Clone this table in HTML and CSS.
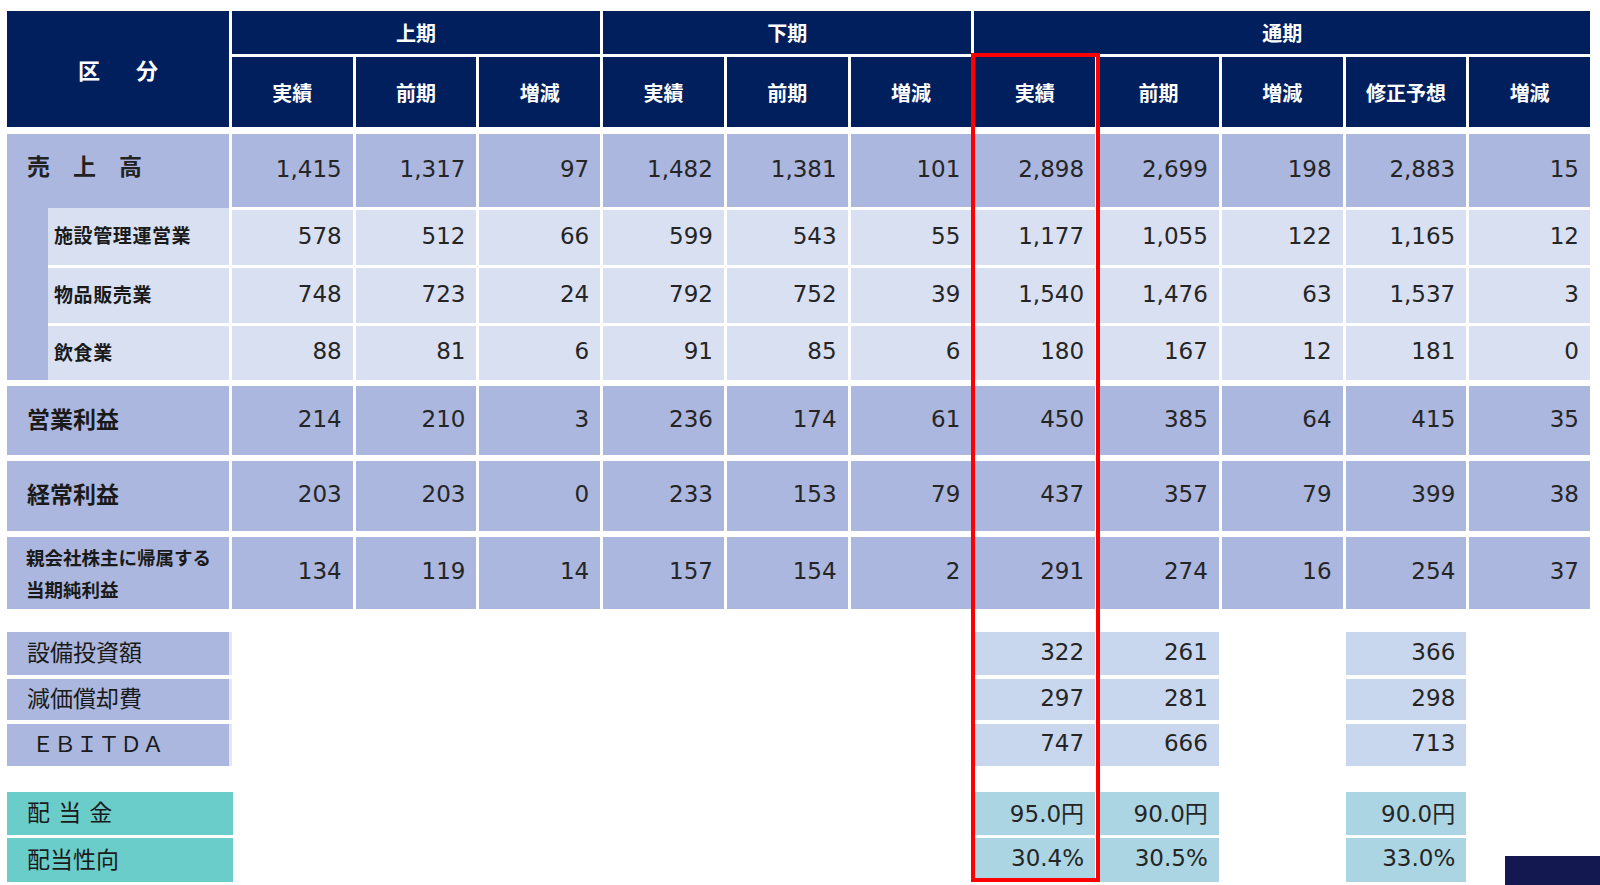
FILE: index.html
```html
<!DOCTYPE html>
<html lang="ja">
<head>
<meta charset="utf-8">
<title>業績</title>
<link rel="stylesheet" href="styles.css">
</head>
<body>
<div class="sheet">
  <div class="head">
    <div class="h-kubun"><span>区</span><span>分</span></div>
    <div class="h-group g1">上期</div>
    <div class="h-group g2">下期</div>
    <div class="h-group g3">通期</div>
    <div class="h-sub">実績</div><div class="h-sub">前期</div><div class="h-sub">増減</div>
    <div class="h-sub">実績</div><div class="h-sub">前期</div><div class="h-sub">増減</div>
    <div class="h-sub">実績</div><div class="h-sub">前期</div><div class="h-sub">増減</div><div class="h-sub">修正予想</div><div class="h-sub">増減</div>
  </div>

  <div class="body">
    <div class="sales">
      <div class="lbl-sales">売　上　高</div>
      <div class="num dark">1,415</div><div class="num dark">1,317</div><div class="num dark">97</div>
      <div class="num dark">1,482</div><div class="num dark">1,381</div><div class="num dark">101</div>
      <div class="num dark">2,898</div><div class="num dark">2,699</div><div class="num dark">198</div><div class="num dark">2,883</div><div class="num dark">15</div>

      <div class="lbl-sub r2">施設管理運営業</div>
      <div class="num light">578</div><div class="num light">512</div><div class="num light">66</div>
      <div class="num light">599</div><div class="num light">543</div><div class="num light">55</div>
      <div class="num light">1,177</div><div class="num light">1,055</div><div class="num light">122</div><div class="num light">1,165</div><div class="num light">12</div>

      <div class="lbl-sub r3">物品販売業</div>
      <div class="num light">748</div><div class="num light">723</div><div class="num light">24</div>
      <div class="num light">792</div><div class="num light">752</div><div class="num light">39</div>
      <div class="num light">1,540</div><div class="num light">1,476</div><div class="num light">63</div><div class="num light">1,537</div><div class="num light">3</div>

      <div class="lbl-sub r4">飲食業</div>
      <div class="num light">88</div><div class="num light">81</div><div class="num light">6</div>
      <div class="num light">91</div><div class="num light">85</div><div class="num light">6</div>
      <div class="num light">180</div><div class="num light">167</div><div class="num light">12</div><div class="num light">181</div><div class="num light">0</div>
    </div>

    <div class="row r-op">
      <div class="lbl-main">営業利益</div>
      <div class="num dark">214</div><div class="num dark">210</div><div class="num dark">3</div>
      <div class="num dark">236</div><div class="num dark">174</div><div class="num dark">61</div>
      <div class="num dark">450</div><div class="num dark">385</div><div class="num dark">64</div><div class="num dark">415</div><div class="num dark">35</div>
    </div>

    <div class="row r-ord">
      <div class="lbl-main">経常利益</div>
      <div class="num dark">203</div><div class="num dark">203</div><div class="num dark">0</div>
      <div class="num dark">233</div><div class="num dark">153</div><div class="num dark">79</div>
      <div class="num dark">437</div><div class="num dark">357</div><div class="num dark">79</div><div class="num dark">399</div><div class="num dark">38</div>
    </div>

    <div class="row r-net">
      <div class="lbl-net"><span>親会社株主に帰属する</span><span>当期純利益</span></div>
      <div class="num dark">134</div><div class="num dark">119</div><div class="num dark">14</div>
      <div class="num dark">157</div><div class="num dark">154</div><div class="num dark">2</div>
      <div class="num dark">291</div><div class="num dark">274</div><div class="num dark">16</div><div class="num dark">254</div><div class="num dark">37</div>
    </div>
  </div>

  <div class="extra">
    <div class="lbl-ex">設備投資額</div>
    <div class="num pale c8">322</div><div class="num pale c9">261</div><div class="num pale c11">366</div>
    <div class="lbl-ex">減価償却費</div>
    <div class="num pale c8">297</div><div class="num pale c9">281</div><div class="num pale c11">298</div>
    <div class="lbl-ex ebitda">ＥＢＩＴＤＡ</div>
    <div class="num pale c8">747</div><div class="num pale c9">666</div><div class="num pale c11">713</div>
  </div>

  <div class="divs">
    <div class="lbl-div">配 当 金</div>
    <div class="num aqua c8">95.0円</div><div class="num aqua c9">90.0円</div><div class="num aqua c11">90.0円</div>
    <div class="lbl-div">配当性向</div>
    <div class="num aqua c8">30.4%</div><div class="num aqua c9">30.5%</div><div class="num aqua c11">33.0%</div>
  </div>

  <div class="highlight"></div>
</div>
<div class="corner"></div>
</body>
</html>
```

FILE: styles.css
```css
html, body {
  margin: 0;
  padding: 0;
  background: #ffffff;
  overflow: hidden;
}

body {
  font-family: "DejaVu Sans", "Noto Sans CJK JP", sans-serif;
  color: #222222;
}

.sheet {
  position: relative;
  width: 1583px;
  margin-left: 7px;
  padding-top: 11px;
}

.head,
.sales,
.row,
.extra,
.divs {
  display: grid;
  grid-template-columns: 222px repeat(11, 1fr);
  column-gap: 3px;
}

/* ---------- header ---------- */
.head {
  grid-template-rows: 43px 70px;
  row-gap: 3px;
  font-family: "Noto Sans CJK JP", sans-serif;
  font-weight: 700;
  color: #ffffff;
}

.head > div {
  background: #021f5d;
  display: flex;
  align-items: center;
  justify-content: center;
}

.h-kubun {
  grid-column: 1;
  grid-row: 1 / span 2;
  font-size: 22px;
  gap: 36px;
}

.h-group {
  font-size: 20px;
  grid-row: 1;
}

.g1 { grid-column: 2 / span 3; }
.g2 { grid-column: 5 / span 3; }
.g3 { grid-column: 8 / span 5; }

.h-sub {
  font-size: 20px;
}

/* ---------- body ---------- */
.body {
  margin-top: 7px;
  display: flex;
  flex-direction: column;
  gap: 6px;
}

.sales {
  grid-template-rows: 73px 55px 55px 54px;
  row-gap: 3px;
}

.row.r-op { height: 69px; }
.row.r-ord { height: 70px; }
.row.r-net { height: 72px; }

.num {
  display: flex;
  align-items: center;
  justify-content: flex-end;
  padding: 0 11px 4px 0;
  font-size: 23px;
  color: #252525;
}

.dark { background: #abb7de; }
.light { background: #d9e0f2; }
.pale { background: #c9d7ee; }
.aqua { background: #acd5e3; }

.lbl-sales {
  grid-column: 1;
  grid-row: 1 / span 4;
  background: #abb7de;
  font-family: "Noto Sans CJK JP", sans-serif;
  font-weight: 700;
  font-size: 23px;
  line-height: 32px;
  padding: 15px 0 0 20px;
}

.lbl-sub {
  grid-column: 1;
  margin-left: 41px;
  background: #d9e0f2;
  display: flex;
  align-items: center;
  padding: 0 0 4px 6px;
  font-family: "Noto Sans CJK JP", sans-serif;
  font-weight: 700;
  font-size: 19px;
  letter-spacing: 0.6px;
  color: #1a1a1a;
}

.lbl-sub.r2 { grid-row: 2; margin-top: -2px; }
.lbl-sub.r3,
.lbl-sub.r4 {
  margin-top: -3px;
  border-top: 3px solid #ffffff;
}
.lbl-sub.r3 { grid-row: 3; }
.lbl-sub.r4 { grid-row: 4; }

.lbl-main {
  background: #abb7de;
  display: flex;
  align-items: center;
  padding: 0 0 6px 20px;
  font-family: "Noto Sans CJK JP", sans-serif;
  font-weight: 700;
  font-size: 23px;
  color: #1a1a1a;
}

.lbl-net {
  background: #abb7de;
  display: flex;
  flex-direction: column;
  justify-content: center;
  padding-left: 19px;
  font-family: "Noto Sans CJK JP", sans-serif;
  font-weight: 700;
  font-size: 18.5px;
  line-height: 32px;
  color: #1a1a1a;
}

/* ---------- extra rows ---------- */
.extra {
  margin-top: 23px;
  grid-template-rows: 43px 41px 42px;
  row-gap: 4px;
}

.divs {
  margin-top: 26px;
  grid-template-rows: 43px 44px;
  row-gap: 3px;
}

.c8 { grid-column: 8; }
.c9 { grid-column: 9; }
.c11 { grid-column: 11; }

.lbl-ex,
.lbl-div {
  grid-column: 1;
  display: flex;
  align-items: center;
  padding: 0 0 5px 20px;
  font-family: "Noto Sans CJK JP", sans-serif;
  font-weight: 400;
  font-size: 23px;
  color: #1a1a1a;
}

.lbl-ex {
  background: #abb7de;
  border-right: 3px solid #e3e7f6;
  margin-right: -3px;
}

.lbl-ex.ebitda {
  font-size: 22px;
  padding-left: 25px;
  padding-bottom: 6px;
}

.lbl-div {
  background: #6bcdca;
  margin-right: -4px;
  word-spacing: 3px;
}

/* ---------- overlays ---------- */
.highlight {
  position: absolute;
  left: 964px;
  top: 53px;
  width: 129px;
  height: 829px;
  box-sizing: border-box;
  border: 4px solid #ff0000;
  pointer-events: none;
}

.corner {
  position: absolute;
  left: 1505px;
  top: 856px;
  width: 95px;
  height: 29px;
  background: #131851;
}
```
